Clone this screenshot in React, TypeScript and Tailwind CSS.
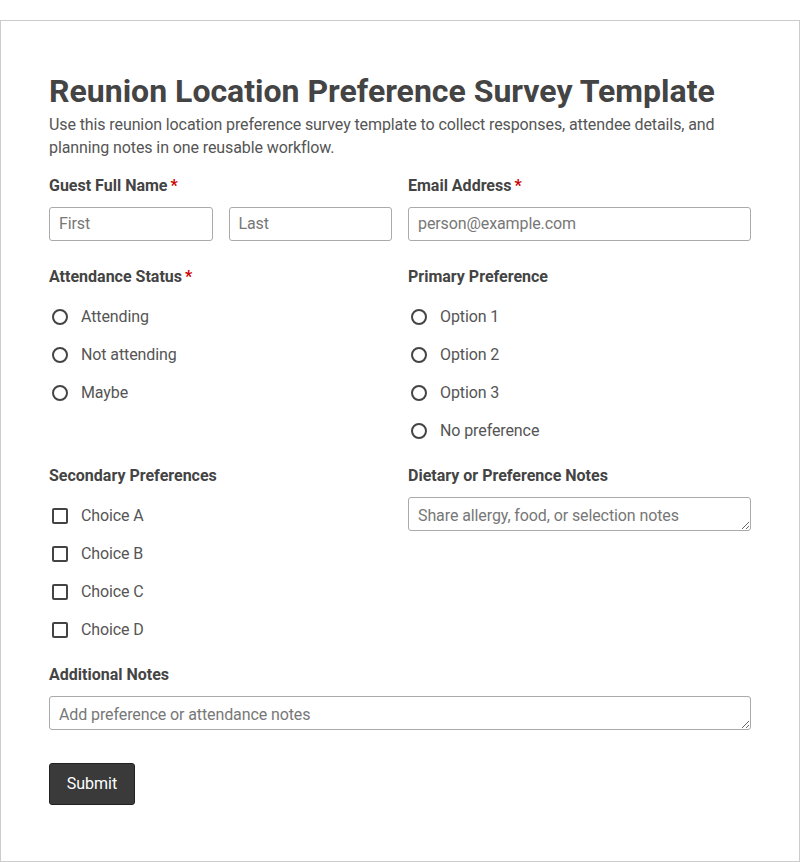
import React from "react";

const font = { fontFamily: "Roboto, 'Noto Sans', sans-serif" };

function Label({ text, required }: { text: string; required?: boolean }) {
  return (
    <div className="pt-[1px] text-[16px] leading-[24px] font-bold text-[#444]">
      {text}
      {required && <span className="text-[#c00] ml-[3px]">*</span>}
    </div>
  );
}

function Radio({ text }: { text: string }) {
  return (
    <label className="flex items-center h-[38px] text-[16px] leading-[24px] text-[#555] tracking-[-0.1px]">
      <span className="ml-[3px] w-[16px] h-[16px] rounded-full border-2 border-[#444] box-border shrink-0" />
      <span className="ml-[13px]">{text}</span>
    </label>
  );
}

function Check({ text }: { text: string }) {
  return (
    <label className="flex items-center h-[38px] text-[16px] leading-[24px] text-[#555] tracking-[-0.1px]">
      <span className="ml-[3px] w-[16px] h-[16px] rounded-[2px] border-2 border-[#444] box-border shrink-0" />
      <span className="ml-[13px]">{text}</span>
    </label>
  );
}

const inputCls =
  "block w-full h-[34px] border border-[#aaa] rounded-[3px] px-[9px] text-[16px] tracking-[-0.1px] text-[#444] placeholder:text-[#777] bg-white outline-none";

export default function App() {
  return (
    <div style={font} className="bg-white min-h-[862px] pt-[20px]">
      <div className="border border-[#ccc] px-[48px] pt-[48px] pb-[56px]">
        <h1 className="text-[32px] leading-[44px] font-bold text-[#444]">
          Reunion Location Preference Survey Template
        </h1>
        <p className="text-[16px] leading-[23px] text-[#555] tracking-[-0.1px]">
          Use this reunion location preference survey template to collect responses, attendee details, and
          planning notes in one reusable workflow.
        </p>

        <div className="mt-[14px] grid grid-cols-2 gap-x-[16px] gap-y-[13px]">
          <div className="pb-[10px]">
            <Label text="Guest Full Name" required />
            <div className="mt-[9px] grid grid-cols-2 gap-x-[16px]">
              <input className={inputCls + " pb-[1px]"} placeholder="First" />
              <input className={inputCls + " pb-[1px]"} placeholder="Last" />
            </div>
          </div>
          <div className="pb-[10px]">
            <Label text="Email Address" required />
            <div className="mt-[9px]">
              <input className={inputCls + " pb-[1px]"} placeholder="person@example.com" />
            </div>
          </div>

          <div>
            <Label text="Attendance Status" required />
            <div className="mt-[9px]">
              <Radio text="Attending" />
              <Radio text="Not attending" />
              <Radio text="Maybe" />
            </div>
          </div>
          <div>
            <Label text="Primary Preference" />
            <div className="mt-[9px]">
              <Radio text="Option 1" />
              <Radio text="Option 2" />
              <Radio text="Option 3" />
              <Radio text="No preference" />
            </div>
          </div>

          <div>
            <Label text="Secondary Preferences" />
            <div className="mt-[9px]">
              <Check text="Choice A" />
              <Check text="Choice B" />
              <Check text="Choice C" />
              <Check text="Choice D" />
            </div>
          </div>
          <div>
            <Label text="Dietary or Preference Notes" />
            <div className="mt-[9px]">
              <textarea
                rows={1}
                className={inputCls + " pt-[7px] pb-[3px] leading-[22px]"}
                placeholder="Share allergy, food, or selection notes"
              />
            </div>
          </div>

          <div className="col-span-2">
            <Label text="Additional Notes" />
            <div className="mt-[9px]">
              <textarea
                rows={1}
                className={inputCls + " pt-[7px] pb-[3px] leading-[22px]"}
                placeholder="Add preference or attendance notes"
              />
            </div>
          </div>
        </div>

        <button className="mt-[33px] h-[42px] w-[86px] bg-[#3a3a3a] border border-[#222] rounded-[3px] text-white text-[16px]">
          Submit
        </button>
      </div>
    </div>
  );
}
